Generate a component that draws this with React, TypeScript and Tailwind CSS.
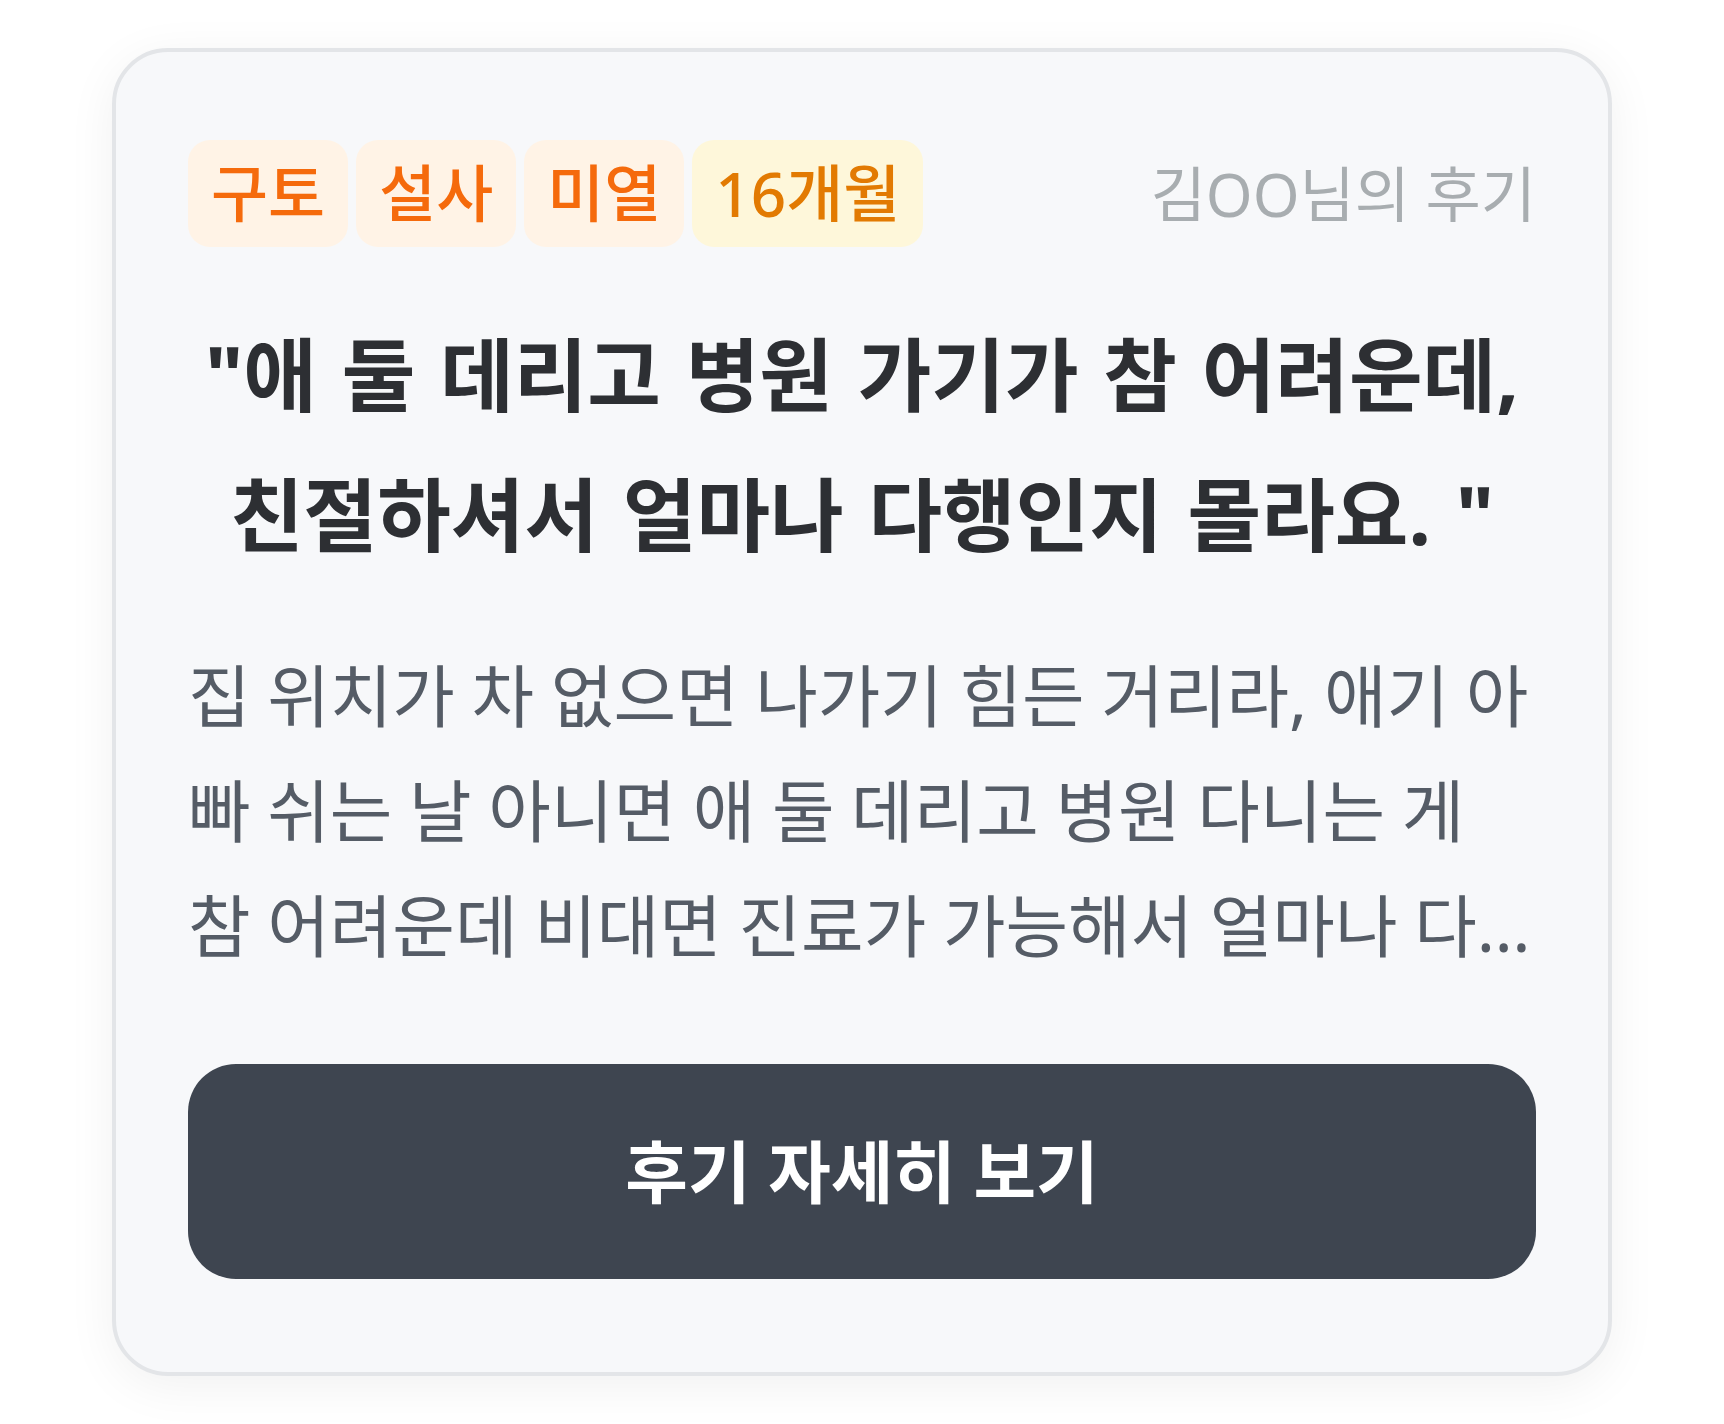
import React from "react";

const tags = [
  { label: "구토", className: "bg-[#fff3e6] text-[#f56a0c]" },
  { label: "설사", className: "bg-[#fff3e6] text-[#f56a0c]" },
  { label: "미열", className: "bg-[#fff3e6] text-[#f56a0c]" },
  { label: "16개월", className: "bg-[#fef7da] text-[#e27a02]" },
];

const body =
  "집 위치가 차 없으면 나가기 힘든 거리라, 애기 아빠 쉬는 날 아니면 애 둘 데리고 병원 다니는 게 참 어려운데 비대면 진료가 가능해서 얼마나 다행인지 몰라요. 선생님도 너무 친절하시고 약도 바로 받아볼 수 있어서 좋았어요.";

export default function App() {
  return (
    <div className="min-h-screen bg-white flex justify-center py-[48px] font-['Noto_Sans','Noto_Sans_CJK_KR',sans-serif]">
      <div className="w-[1500px] h-[1328px] rounded-[56px] border-4 border-[#e3e5e8] bg-[#f7f8fa] shadow-[0_10px_50px_rgba(0,0,0,0.06)] px-[72px] pt-[88px] flex flex-col">
        <div className="flex items-center justify-between">
          <div className="flex gap-2">
            {tags.map((t) => (
              <span
                key={t.label}
                className={`h-[107px] px-[23px] rounded-[22px] flex items-center text-[62px] font-medium ${t.className}`}
              >
                {t.label}
              </span>
            ))}
          </div>
          <span className="text-[60px] text-[#a8adb0]">김OO님의 후기</span>
        </div>

        <h2 className="mt-[57px] text-center text-[80px] leading-[140px] font-bold text-[#2d2f33] [word-spacing:4px]">
          "애 둘 데리고 병원 가기가 참 어려운데,
          <br />
          친절하셔서 얼마나 다행인지 몰라요. "
        </h2>

        <p className="mt-[54px] text-[68px] leading-[115px] text-[#555c66] line-clamp-3 [word-spacing:-1px]">
          {body}
        </p>

        <button className="mt-[81px] h-[215px] w-full rounded-[48px] bg-[#3e4550] text-white text-[68px] font-semibold">
          후기 자세히 보기
        </button>
      </div>
    </div>
  );
}
